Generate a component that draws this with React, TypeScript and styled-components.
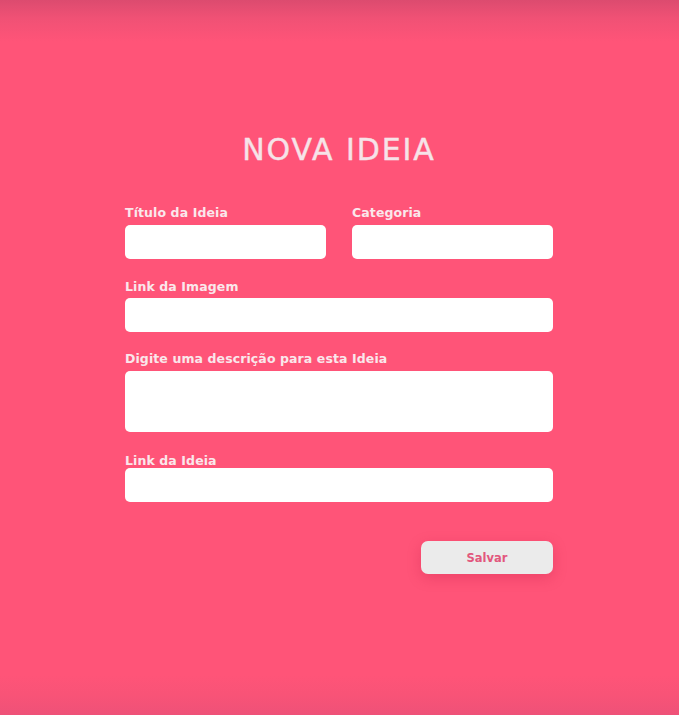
import React from "react";
import styled, { createGlobalStyle } from "styled-components";

const Global = createGlobalStyle`
  html, body { margin: 0; padding: 0; }
  body { font-family: "DejaVu Sans", "Liberation Sans", sans-serif; }
  * { box-sizing: border-box; }
`;

const Page = styled.div`
  min-height: 715px;
  display: flex;
  justify-content: center;
  padding-right: 1px;
  background: linear-gradient(
    to bottom,
    #dc4b6f 0px,
    #f05175 18px,
    #ff5478 42px,
    #ff5478 675px,
    #f85377 695px,
    #ee5178 715px
  );
`;

const Form = styled.form`
  width: 428px;
  padding-top: 130px;
  display: flex;
  flex-direction: column;
`;

const Title = styled.h1`
  margin: 0 0 35px;
  text-align: center;
  font-family: "DejaVu Sans", sans-serif;
  font-weight: 400;
  font-size: 30px;
  letter-spacing: 1.9px;
  color: #f6e3e8;
  line-height: 40px;
  -webkit-text-stroke: 0.4px #f6e3e8;
`;

const Row = styled.div`
  display: grid;
  grid-template-columns: 1fr 1fr;
  gap: 26px;
`;

const Field = styled.div<{ $gap?: number }>`
  display: flex;
  flex-direction: column;
  margin-bottom: ${(p) => p.$gap ?? 20}px;
`;

const Label = styled.label<{ $mb?: number }>`
  font-family: "DejaVu Sans", sans-serif;
  font-weight: 700;
  font-size: 12.5px;
  color: #fae7eb;
  line-height: 16px;
  margin-bottom: ${(p) => p.$mb ?? 4}px;
  letter-spacing: 0.1px;
`;

const Input = styled.input`
  height: 34px;
  border: none;
  border-radius: 5px;
  background: #ffffff;
  outline: none;
  padding: 0 10px;
`;

const TextArea = styled.textarea`
  height: 61px;
  border: none;
  border-radius: 5px;
  background: #ffffff;
  outline: none;
  resize: none;
  padding: 8px 10px;
`;

const Actions = styled.div`
  display: flex;
  justify-content: flex-end;
  margin-top: 39px;
`;

const Button = styled.button`
  width: 132px;
  height: 33px;
  border: none;
  border-radius: 7px;
  background: #ebebeb;
  color: #e2577d;
  font-family: "DejaVu Sans", sans-serif;
  font-weight: 700;
  font-size: 11.5px;
  box-shadow: 0 4px 14px rgba(180, 20, 60, 0.25);
  cursor: pointer;
`;

export default function App() {
  return (
    <>
      <Global />
      <Page>
        <Form onSubmit={(e) => e.preventDefault()}>
          <Title>NOVA IDEIA</Title>
          <Row>
            <Field>
              <Label>Título da Ideia</Label>
              <Input />
            </Field>
            <Field>
              <Label>Categoria</Label>
              <Input />
            </Field>
          </Row>
          <Field $gap={19}>
            <Label $mb={3}>Link da Imagem</Label>
            <Input />
          </Field>
          <Field $gap={21}>
            <Label>Digite uma descrição para esta Ideia</Label>
            <TextArea />
          </Field>
          <Field $gap={0}>
            <Label $mb={-1}>Link da Ideia</Label>
            <Input />
          </Field>
          <Actions>
            <Button type="submit">Salvar</Button>
          </Actions>
        </Form>
      </Page>
    </>
  );
}
